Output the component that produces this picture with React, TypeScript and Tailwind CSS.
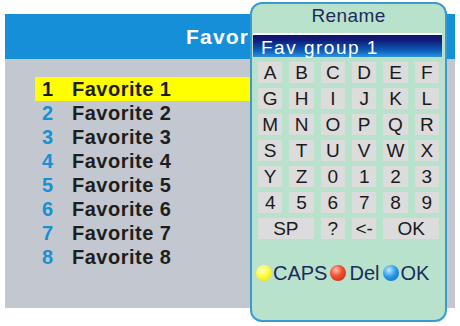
import React from "react";

const FONT = { fontFamily: '"Liberation Sans", Arial, Helvetica, sans-serif' };

type Key = { label: string; span?: number };

const keyRows: Key[][] = [
  ["A", "B", "C", "D", "E", "F"].map((l) => ({ label: l })),
  ["G", "H", "I", "J", "K", "L"].map((l) => ({ label: l })),
  ["M", "N", "O", "P", "Q", "R"].map((l) => ({ label: l })),
  ["S", "T", "U", "V", "W", "X"].map((l) => ({ label: l })),
  ["Y", "Z", "0", "1", "2", "3"].map((l) => ({ label: l })),
  ["4", "5", "6", "7", "8", "9"].map((l) => ({ label: l })),
  [{ label: "SP", span: 2 }, { label: "?" }, { label: "<-" }, { label: "OK", span: 2 }],
];

export default function App() {
  const favs = [1, 2, 3, 4, 5, 6, 7, 8];
  return (
    <div className="relative w-[460px] h-[326px] bg-white overflow-hidden" style={FONT}>
      <div className="pt-[14px] pl-[5px] w-[455px]">
        <div className="h-[45px] bg-[#1590d8] pl-[181px] flex items-center text-white font-bold text-[21px] tracking-[1.2px]">
          <div className="w-[62px] overflow-hidden whitespace-nowrap">Favorites</div>
        </div>
        <div className="h-[249px] bg-[#c3c8d0] pt-[18px] pl-[30px]">
          {favs.map((n) => (
            <div
              key={n}
              className={`flex w-[230px] h-[24px] leading-[24px] text-[20px] font-bold tracking-[0.5px] ${
                n === 1 ? "bg-[#ffff00]" : ""
              }`}
            >
              <span className={`w-[37px] pl-[7px] ${n === 1 ? "text-[#1a1a1a]" : "text-[#1a8fd4]"}`}>{n}</span>
              <span className="text-[#1e1e1e]">Favorite {n}</span>
            </div>
          ))}
        </div>
      </div>

      <div className="absolute left-[250px] top-[2px] w-[197px] h-[320px] rounded-[12px] border-2 border-[#3b9bd0] bg-[#b9e2cc] flex flex-col">
        <div className="h-[29px] leading-[23px] text-center text-[19px] text-[#1c2a5c] tracking-[0.4px]">Rename</div>
        <div className="h-[24px] ml-[1px] mr-[3px] pl-[8px] pt-[5px] leading-[19px] text-[19px] text-white tracking-[1.5px] bg-[linear-gradient(to_bottom,#ffffff_0px,#ffffff_2px,#14146a_2px,#101c78_30%,#0d5cb8_72%,#2d92e2_100%)]">
          Fav group 1
        </div>
        <div className="mt-[5px] px-[6px] grid grid-cols-6 gap-x-[7px] gap-y-[5px] auto-rows-[21px]">
          {keyRows.flat().map((k, i) => (
            <div
              key={i}
              className={`bg-[#dcdcdc] flex items-center justify-center text-[19px] leading-[21px] text-[#1a1a1a] ${
                k.span === 2 ? "col-span-2" : ""
              }`}
            >
              {k.label}
            </div>
          ))}
        </div>
        <div className="mt-[26px] pl-[4px] flex items-center h-[16px] text-[20px] text-[#1c2a5c]">
          <span className="w-[16px] h-[16px] rounded-full bg-[radial-gradient(circle_at_38%_32%,#ffffe0_0%,#ffff50_35%,#e6dc00_100%)]" />
          <span className="ml-[1px] leading-[16px]">CAPS</span>
          <span className="ml-[3px] w-[16px] h-[16px] rounded-full bg-[radial-gradient(circle_at_38%_32%,#ffc0b0_0%,#f05234_40%,#c0200e_100%)]" />
          <span className="ml-[3px] leading-[16px]">Del</span>
          <span className="ml-[4px] w-[16px] h-[16px] rounded-full bg-[radial-gradient(circle_at_38%_32%,#c0ecff_0%,#2c9ce8_45%,#0a5cbc_100%)]" />
          <span className="ml-[1px] leading-[16px]">OK</span>
        </div>
      </div>
    </div>
  );
}
